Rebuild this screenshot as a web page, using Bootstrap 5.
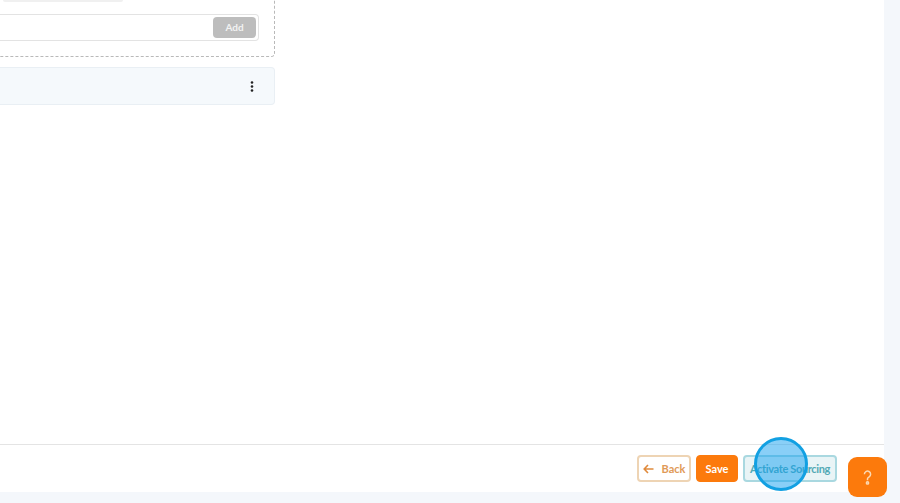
<!DOCTYPE html>
<html lang="en">
<head>
<meta charset="utf-8">
<title>Sourcing</title>
<link href="https://cdn.jsdelivr.net/npm/bootstrap@5.3.0/dist/css/bootstrap.min.css" rel="stylesheet">
<style>
  html, body { height: 503px; overflow: hidden; }
  body { background: #f4f7fb; font-family: "Lato", "Liberation Sans", sans-serif; }
  .app-shell { width: 884px; height: 492px; background: #fff; position: relative; }
  .content-area { width: 275px; height: 444px; }
  .dashed-box { height: 57px; border: 1px dashed #b9b9b9; border-width: 0 1px 1px 0; border-bottom-right-radius: 4px; }
  .stub-line { width: 120px; height: 2px; margin-left: 3px; background: #f0f0f0; border-radius: 0 0 3px 3px; }
  .add-row { width: 259px; height: 27px; margin-top: 12px; padding: 2px 2px; border: 1px solid #e3e3e3; border-left: 0; border-radius: 0 4px 4px 0; }
  .add-btn { width: 43px; height: 21px; padding: 0; font-size: 10px; font-weight: 700; color: #f2f2f2; background: #bdbdbd; border: 0; border-radius: 4px; }
  .section-bar { height: 38px; margin-top: 10px; padding-right: 20px; background: #f5f9fc; border: 1px solid #e9eff4; border-left: 0; border-radius: 0 4px 4px 0; }
  .footer-bar { height: 48px; padding-right: 47px; border-top: 1px solid #e4e4e4; gap: 5px; padding-top: 10px; }
  .act-btn { height: 27px; padding: 0; font-size: 11px; font-weight: 700; border-radius: 4px; line-height: 1; white-space: nowrap; }
  .back-btn { width: 54px; color: #df9a58; background: #fff; border: 2px solid #eed4b4; }
  .save-btn { width: 42px; color: #fff; background: #fc7a0c; border: 1px solid #fc7a0c; }
  .source-btn { width: 94px; color: #52a9b5; background: #e9f4f6; border: 2px solid #a9d8e0; letter-spacing: -.35px; }
  .help-btn { position: absolute; left: 848px; top: 457px; width: 39px; height: 40px; padding: 0; background: #fc7a0c; border: 0; border-radius: 9px; }
  .click-ring { position: absolute; left: 754px; top: 437px; width: 54px; height: 54px; background: rgba(20, 160, 240, .5); border: 3px solid #12a0e2; border-radius: 50%; }
</style>
</head>
<body>
<div class="app-shell d-flex flex-column">
  <div class="content-area flex-grow-1">
    <div class="dashed-box">
      <div class="stub-line"></div>
      <div class="add-row d-flex justify-content-end">
        <button type="button" class="btn add-btn">Add</button>
      </div>
    </div>
    <div class="section-bar d-flex align-items-center justify-content-end">
      <svg width="4" height="11" viewBox="0 0 4 11" fill="#222"><circle cx="2" cy="1.5" r="1.3"/><circle cx="2" cy="5.5" r="1.3"/><circle cx="2" cy="9.5" r="1.3"/></svg>
    </div>
  </div>
  <div class="footer-bar d-flex justify-content-end">
    <button type="button" class="btn act-btn back-btn d-flex align-items-center justify-content-center gap-2">
      <svg width="11" height="10" viewBox="0 0 11 10" fill="none" stroke="#e08a3c" stroke-width="1.6"><path d="M10.5 5H1.2M5 1 1.2 5 5 9"/></svg>Back
    </button>
    <button type="button" class="btn act-btn save-btn">Save</button>
    <button type="button" class="btn act-btn source-btn">Activate Sourcing</button>
  </div>
</div>
<button type="button" class="btn help-btn d-flex align-items-center justify-content-center">
  <svg width="9" height="15" viewBox="0 0 9 15" fill="none" stroke="#fbd9b3" stroke-width="1.5"><path d="M1.4 4.2a3.1 3.1 0 1 1 4.8 2.6c-1 .6-1.7 1-1.7 2v1.4"/><circle cx="4.5" cy="12.9" r="1.1"/></svg>
</button>
<div class="click-ring"></div>
<script src="https://cdn.jsdelivr.net/npm/bootstrap@5.3.0/dist/js/bootstrap.bundle.min.js"></script>
</body>
</html>
